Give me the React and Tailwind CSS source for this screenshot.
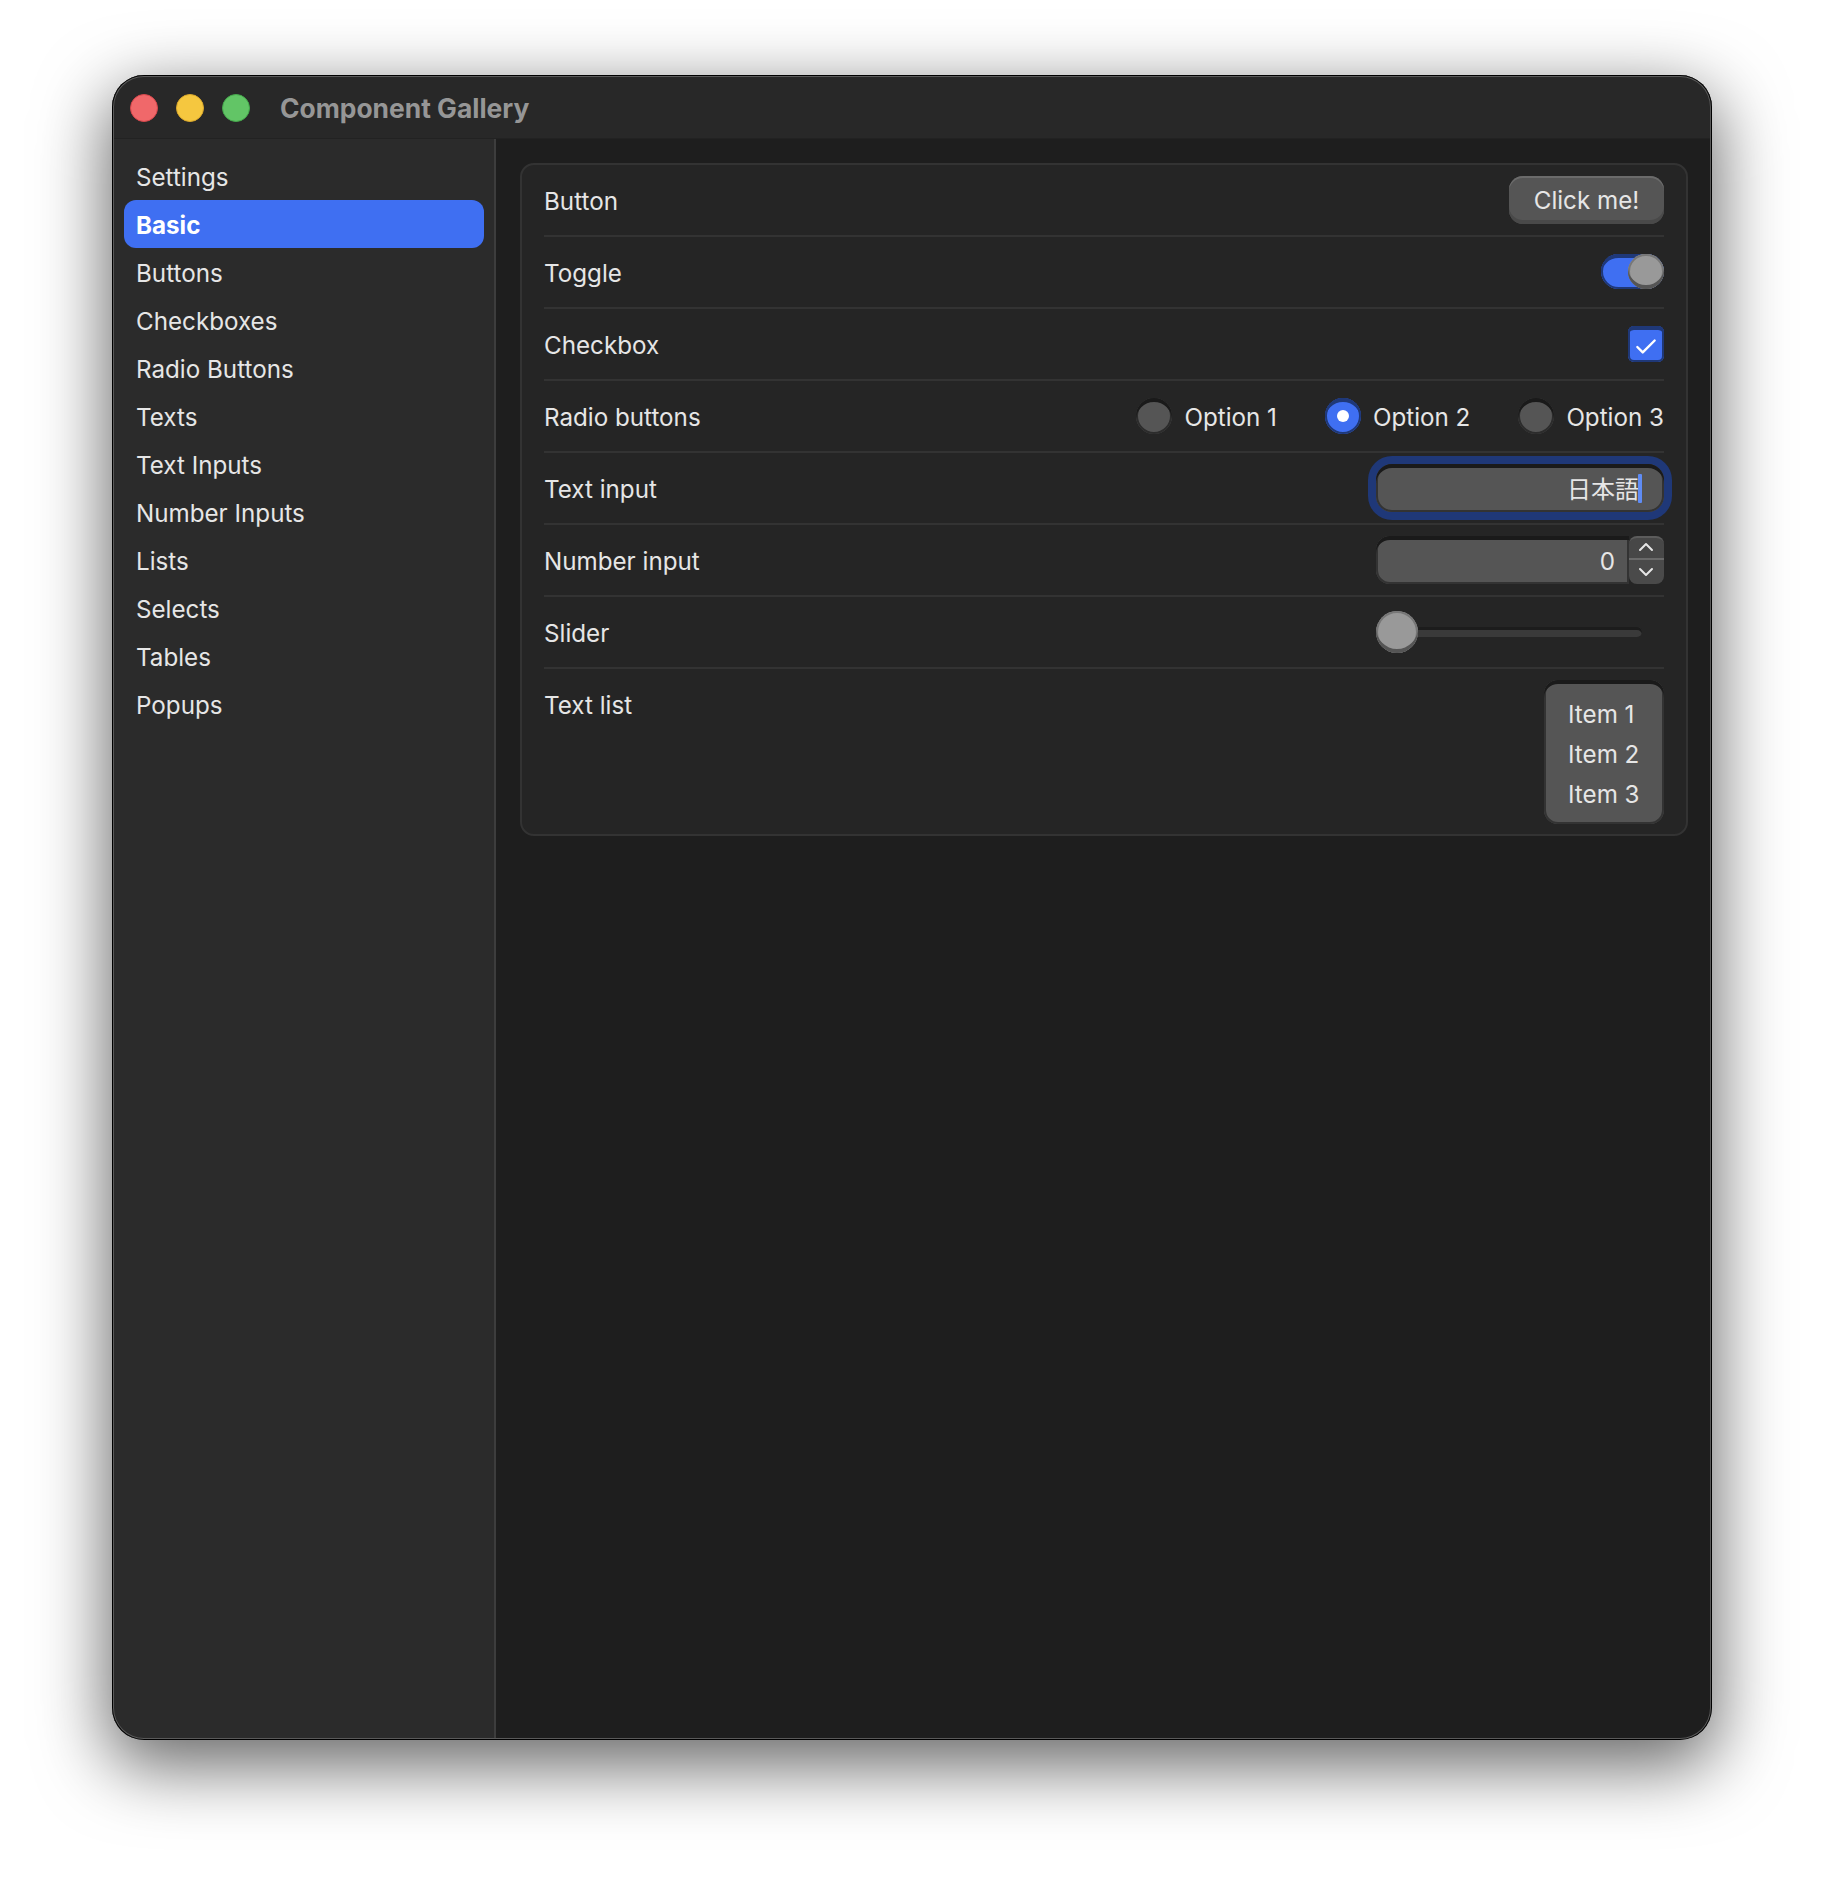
import React from 'react';
import { Check, ChevronUp, ChevronDown } from 'lucide-react';

const NAV_ITEMS = ['Settings', 'Basic', 'Buttons', 'Checkboxes', 'Radio Buttons', 'Texts', 'Text Inputs', 'Number Inputs', 'Lists', 'Selects', 'Tables', 'Popups'];

const sunken = 'bg-[#555555] shadow-[inset_0_4px_0_#1a1a1a,inset_0_0_0_2px_#333333]';

const Row = ({ label, last, children }) => (
  <div className={`flex justify-between ${last ? 'items-start pb-[10px]' : 'items-center h-[72px] border-b-2 border-[#333333]'}`}>
    <span className={`text-[24.2px] leading-[36px] ${last ? 'pt-[19px]' : 'pt-[4px]'}`}>{label}</span>
    {children}
  </div>
);

const Radio = ({ label, selected }) => (
  <div className="flex items-center gap-[12px]">
    <div className={`flex items-center justify-center w-[36px] h-[36px] rounded-full ${selected ? 'bg-[#3f6ff2] shadow-[inset_0_4px_0_#1f3878,inset_0_0_0_2px_#1f3878]' : 'bg-[#555555] shadow-[inset_0_4px_0_#1a1a1a,inset_0_0_0_2px_#2c2c2c]'}`}>
      {selected && <div className="w-[12px] h-[12px] rounded-full bg-white" />}
    </div>
    <span className="h-[36px] text-[24.2px] leading-[40px]">{label}</span>
  </div>
);

const Knob = ({ size }) => (
  <div className={`${size} rounded-full bg-[#999999] shadow-[inset_0_-4px_0_#555555,inset_0_0_0_2px_#777777]`} />
);

export default function App() {
  return (
    <div className="w-[1824px] h-[1888px] bg-white pt-[75px] pl-[112px] overflow-hidden [font-family:Inter,'Noto_Sans_CJK_JP',sans-serif] text-[#e6e6e6]">
      <div className="w-[1600px] h-[1665px] rounded-[32px] shadow-[0_22px_70px_4px_rgba(0,0,0,0.6)]">
        <div className="relative flex flex-col h-full rounded-[32px] overflow-hidden bg-[#1e1e1e]">
          <div className="flex items-center h-[64px] shrink-0 bg-[#282828] border-b border-[#222222] pl-[18px] pt-[2px]">
            <div className="w-[28px] h-[28px] rounded-full bg-[#f0686a] border border-[#d8474c]" />
            <div className="ml-[18px] w-[28px] h-[28px] rounded-full bg-[#f5c73f] border border-[#dba92c]" />
            <div className="ml-[18px] w-[28px] h-[28px] rounded-full bg-[#62c566] border border-[#45a84c]" />
            <span className="ml-[30px] pt-[2px] text-[26.4px] font-bold text-[#969696]">Component Gallery</span>
          </div>

          <div className="flex flex-1 min-h-0">
            <div className="w-[384px] shrink-0 bg-[#2b2b2b] border-r-2 border-[#3d3d3d] pt-[13px] pl-[12px] pr-[10px]">
              {NAV_ITEMS.map((item) => (
                <div
                  key={item}
                  className={`h-[48px] flex items-center px-[12px] pt-[5px] rounded-[12px] text-[24.2px] ${item === 'Basic' ? 'bg-[#3f6ff2] text-white font-bold' : ''}`}
                >
                  {item}
                </div>
              ))}
            </div>

            <div className="flex-1 p-[24px]">
              <div className="bg-[#252525] border-2 border-[#333333] rounded-[14px] px-[22px]">
                <Row label="Button">
                  <button type="button" className="h-[48px] w-[155px] rounded-[14px] bg-[#555555] text-[24.2px] text-[#e6e6e6] pt-[3px] shadow-[inset_0_-4px_0_#494949,inset_0_2px_0_#6b6b6b]">
                    Click me!
                  </button>
                </Row>

                <Row label="Toggle">
                  <div className="relative w-[63px] h-[35px] -mt-[1px] rounded-full bg-[#3f6ff2] shadow-[inset_0_4px_0_#1f3878,inset_0_0_0_2px_#1f3878]">
                    <div className="absolute right-0 top-0">
                      <Knob size="w-[36px] h-[35px]" />
                    </div>
                  </div>
                </Row>

                <Row label="Checkbox">
                  <div className="flex items-center justify-center w-[36px] h-[36px] rounded-[6px] bg-[#3f6ff2] pt-[5px] shadow-[inset_0_4px_0_#1f3878,inset_0_0_0_2px_#1f3878]">
                    <Check size={26} strokeWidth={2.2} color="#ffffff" />
                  </div>
                </Row>

                <Row label="Radio buttons">
                  <div className="flex gap-[48px]">
                    <Radio label="Option 1" />
                    <Radio label="Option 2" selected />
                    <Radio label="Option 3" />
                  </div>
                </Row>

                <Row label="Text input">
                  <div className="w-[288px] h-[48px] rounded-[16px] flex items-center justify-end pr-[22px] bg-[#555555] shadow-[inset_0_4px_0_#1a1a1a,inset_0_0_0_2px_#333333,0_0_0_8px_#1f3878]">
                    <span className="text-[24px] leading-[36px] pt-[4px]">日本語</span>
                    <div className="w-[4px] h-[29px] -ml-[1px] rounded-[1px] bg-[#5f8cf5]" />
                  </div>
                </Row>

                <Row label="Number input">
                  <div className="flex w-[288px] h-[48px]">
                    <div className={`flex-1 rounded-l-[14px] flex items-center justify-end pr-[14px] pt-[5px] text-[24.2px] ${sunken}`}>0</div>
                    <div className="w-[35px] flex flex-col">
                      <div className="h-[22px] flex items-center justify-center pr-[1px] pb-[2px] rounded-t-[8px] bg-[#474747] border-t-2 border-[#5c5c5c]">
                        <ChevronUp size={24} strokeWidth={2} className="shrink-0" />
                      </div>
                      <div className="flex-1 flex items-center justify-center pr-[1px] rounded-b-[8px] bg-[#4a4a4a] border-t-2 border-[#6a6a6a]">
                        <ChevronDown size={24} strokeWidth={2} className="shrink-0" />
                      </div>
                    </div>
                  </div>
                </Row>

                <Row label="Slider">
                  <div className="flex items-center w-[288px]">
                    <Knob size="w-[42px] h-[42px] shrink-0" />
                    <div className="flex-1 h-[10px] mr-[22px] rounded-r-full bg-[#3a3a3a] shadow-[inset_0_3px_0_#1c1c1c]" />
                  </div>
                </Row>

                <Row label="Text list" last>
                  <div className={`mt-[11px] w-[120px] h-[144px] rounded-[14px] flex flex-col justify-center pl-[24px] pt-[5px] text-[24.2px] leading-[40px] ${sunken}`}>
                    <span>Item 1</span>
                    <span>Item 2</span>
                    <span>Item 3</span>
                  </div>
                </Row>
              </div>
            </div>
          </div>

          <div className="absolute inset-0 rounded-[32px] pointer-events-none shadow-[inset_0_0_0_1px_#000000,inset_0_0_0_2px_#5a5a5a]" />
        </div>
      </div>
    </div>
  );
}
